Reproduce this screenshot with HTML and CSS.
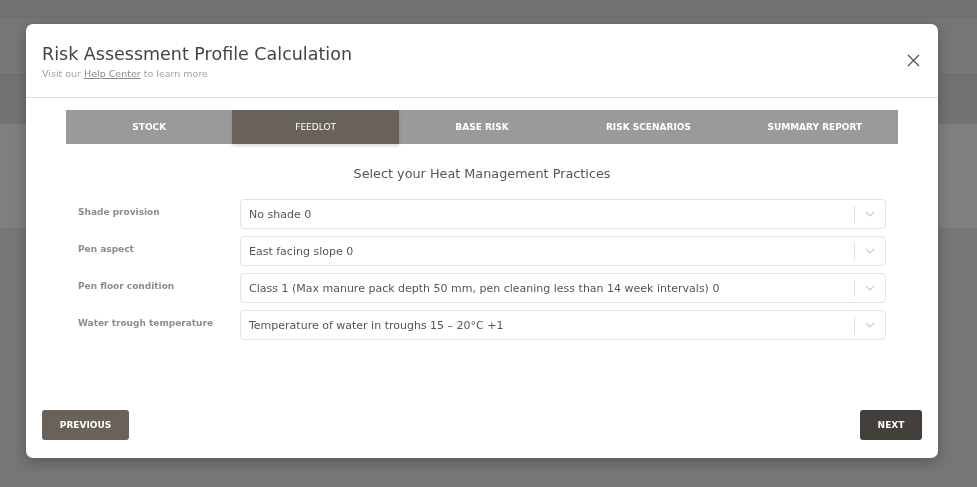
FILE: index.html
```html
<html>
<head>
  <title>Risk Assessment Profile Calculation</title>
  <link rel="stylesheet" href="styles.css">
</head>
<body>

<div class="page">
  <div class="page-top"></div>
  <div class="page-nav"></div>
  <div class="page-sub"></div>
  <div class="page-band"></div>
</div>

<div class="overlay">
  <div class="modal">
    <div class="modal-header">
      <div>
        <h1>Risk Assessment Profile Calculation</h1>
        <p class="help">Visit our <a href="#">Help Center</a> to learn more</p>
      </div>
      <button class="close" aria-label="Close">
        <svg width="13" height="13" viewBox="0 0 13 13"><path d="M1 1L12 12M12 1L1 12" stroke="#555" stroke-width="1.3" fill="none"/></svg>
      </button>
    </div>

    <div class="modal-body">
      <div class="tabs">
        <div class="tab">STOCK</div>
        <div class="tab active">FEEDLOT</div>
        <div class="tab">BASE RISK</div>
        <div class="tab">RISK SCENARIOS</div>
        <div class="tab">SUMMARY REPORT</div>
      </div>

      <h2>Select your Heat Management Practices</h2>

      <div class="fields">
        <div class="field">
          <label>Shade provision</label>
          <div class="select"><span>No shade 0</span><i class="sep"></i><svg class="chev" width="10" height="6" viewBox="0 0 10 6"><path d="M1 1L5 5L9 1" stroke="#ccc" stroke-width="1.2" fill="none"/></svg></div>
        </div>
        <div class="field">
          <label>Pen aspect</label>
          <div class="select"><span>East facing slope 0</span><i class="sep"></i><svg class="chev" width="10" height="6" viewBox="0 0 10 6"><path d="M1 1L5 5L9 1" stroke="#ccc" stroke-width="1.2" fill="none"/></svg></div>
        </div>
        <div class="field">
          <label>Pen floor condition</label>
          <div class="select"><span>Class 1 (Max manure pack depth 50 mm, pen cleaning less than 14 week intervals) 0</span><i class="sep"></i><svg class="chev" width="10" height="6" viewBox="0 0 10 6"><path d="M1 1L5 5L9 1" stroke="#ccc" stroke-width="1.2" fill="none"/></svg></div>
        </div>
        <div class="field">
          <label>Water trough temperature</label>
          <div class="select"><span>Temperature of water in troughs 15 – 20°C +1</span><i class="sep"></i><svg class="chev" width="10" height="6" viewBox="0 0 10 6"><path d="M1 1L5 5L9 1" stroke="#ccc" stroke-width="1.2" fill="none"/></svg></div>
        </div>
      </div>
    </div>

    <div class="modal-footer">
      <button class="btn btn-prev">PREVIOUS</button>
      <button class="btn btn-next">NEXT</button>
    </div>
  </div>
</div>

</body>
</html>
```

FILE: styles.css
```css
* {
  box-sizing: border-box;
}

body {
  margin: 0;
  height: 487px;
  overflow: hidden;
  background: #777674;
  font-family: 'DejaVu Sans', 'Open Sans', sans-serif;
}

/* page behind the dimmed overlay */
.page {
  display: flex;
  flex-direction: column;
}

.page-top {
  height: 18px;
  border-bottom: 1px solid #6e6d6b;
  background: #737270;
}

.page-nav {
  height: 57px;
  border-bottom: 1px solid #6f6e6c;
  background: #777674;
}

.page-sub {
  height: 49px;
  background: #737270;
}

.page-band {
  height: 104px;
  background: #7f7f7f;
}

.overlay {
  position: fixed;
  inset: 0;
  padding: 24px 39px 0 26px;
}

.modal {
  width: 912px;
  height: 434px;
  background: #fff;
  border-radius: 7px;
  box-shadow: 0 4px 14px rgba(0, 0, 0, 0.25);
  display: flex;
  flex-direction: column;
}

.modal-header {
  display: flex;
  justify-content: space-between;
  align-items: flex-start;
  padding: 20px 18px 0 16px;
  height: 74px;
  border-bottom: 1px solid #ddd;
}

h1 {
  margin: 0;
  font-size: 17.5px;
  font-weight: 400;
  color: #444;
}

.help {
  margin: 4px 0 0;
  font-size: 9.5px;
  color: #a3a3a3;
}

.help a {
  color: #888;
}

.close {
  border: none;
  background: none;
  padding: 0;
  margin-top: 10px;
  cursor: pointer;
}

.modal-body {
  flex: 1;
  padding: 12px 40px 0 40px;
}

.tabs {
  display: grid;
  grid-template-columns: repeat(5, 1fr);
  background: #9a9a9a;
  height: 34px;
}

.tab {
  display: flex;
  align-items: center;
  justify-content: center;
  color: #fff;
  font-size: 9px;
  font-weight: 700;
}

.tab.active {
  background: #68625b;
  font-weight: 400;
  box-shadow: 0 2px 3px rgba(0, 0, 0, 0.15);
}

h2 {
  margin: 22px 0 18px;
  text-align: center;
  font-size: 12.8px;
  font-weight: 400;
  color: #555;
}

.fields {
  display: flex;
  flex-direction: column;
  gap: 7px;
}

.field {
  display: grid;
  grid-template-columns: 174px 646px;
  align-items: start;
}

.field label {
  padding: 8px 0 0 12px;
  font-size: 9px;
  font-weight: 700;
  color: #8c8c8c;
}

.select {
  display: flex;
  align-items: center;
  height: 30px;
  border: 1px solid #e2e2e2;
  border-radius: 4px;
  padding: 0 10px 0 8px;
  font-size: 11px;
  color: #555;
}

.select span {
  flex: 1;
}

.sep {
  width: 1px;
  height: 17px;
  background: #ddd;
  margin-right: 10px;
}

.modal-footer {
  display: flex;
  justify-content: space-between;
  padding: 0 16px 18px 16px;
}

.btn {
  height: 30px;
  border: none;
  border-radius: 3px;
  color: #fff;
  font-family: inherit;
  font-size: 9px;
  font-weight: 700;
  cursor: pointer;
}

.btn-prev {
  width: 87px;
  background: #68625b;
}

.btn-next {
  width: 62px;
  background: #433f3a;
}
```
